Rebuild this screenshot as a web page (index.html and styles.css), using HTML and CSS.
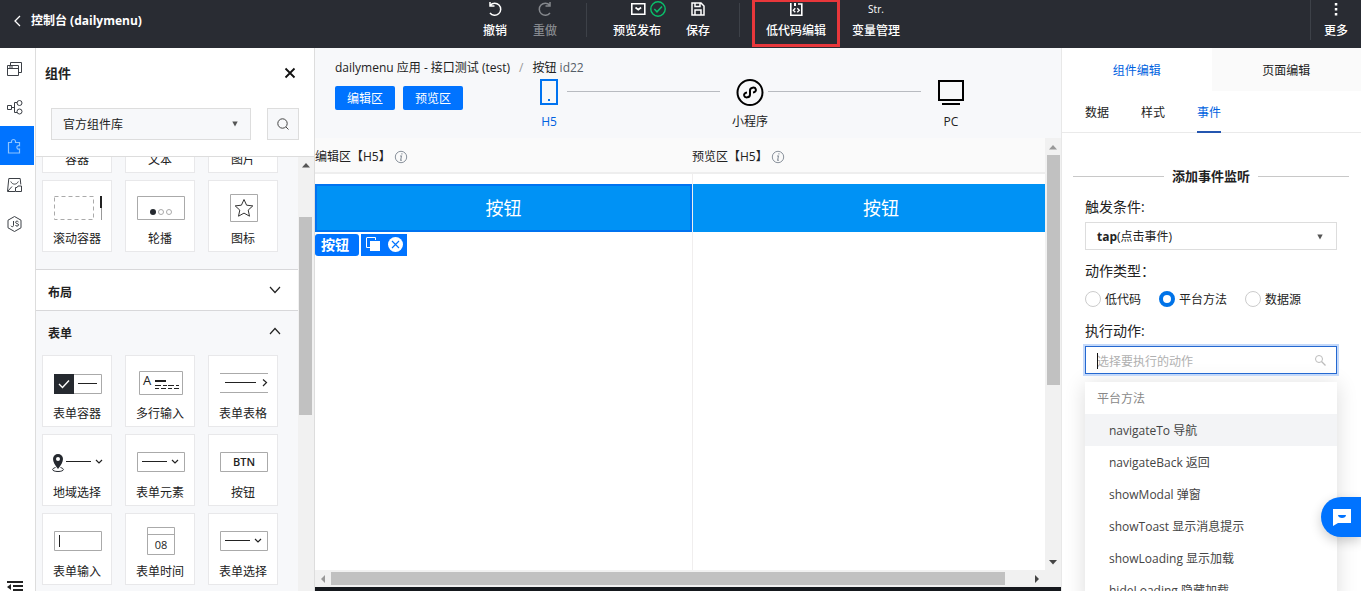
FILE: index.html
```html
<!DOCTYPE html>
<html lang="zh-CN">
<head>
<meta charset="utf-8">
<title>控制台 (dailymenu)</title>
<link rel="stylesheet" href="styles.css">
</head>
<body>
<svg class="defs" aria-hidden="true">
  <symbol id="info" viewBox="0 0 14 14"><circle cx="7" cy="7" r="5.7" fill="none" stroke="#8a929c"/><path d="M7.900 3.300v1.300M6 6h1.500l-.9 4.300h1.400" fill="none" stroke="#8a929c" stroke-width="1.100"/></symbol>
  <symbol id="caret" viewBox="0 0 6 6"><path d="M.3 .5h5.400L3 5.500z" fill="#555"/></symbol>
  <symbol id="up" viewBox="0 0 16 16"><path d="M4 10.500h8L8 6z"/></symbol>
  <symbol id="down" viewBox="0 0 16 16"><path d="M4 6h8l-4 4.500z"/></symbol>
</svg>

<header class="topbar">
  <a class="back" href="#">
    <svg width="10" height="12" viewBox="0 0 10 12"><path d="M8 1 3 6l5 5" fill="none" stroke="#fff" stroke-width="1.300"/></svg>
    <span>控制台 (dailymenu)</span>
  </a>
  <nav class="tools">
    <button class="tool"><svg width="18" height="18" viewBox="0 0 18 18"><path d="M4.300 5.200A6 6 0 1 1 4 13M4 2v4h4.500" fill="none" stroke="#fff" stroke-width="1.500"/></svg><span>撤销</span></button>
    <button class="tool tool-off"><svg width="18" height="18" viewBox="0 0 18 18"><path d="M13.700 5.200A6 6 0 1 0 14 13M14 2v4H9.500" fill="none" stroke="#85888d" stroke-width="1.500"/></svg><span>重做</span></button>
    <span class="bar"></span>
    <button class="tool tool-wide"><svg class="publish" width="38" height="18" viewBox="0 0 38 18"><path d="M2.800 3.800h13v10.400h-13zM6.500 7.500l2.800 2.200 2.800-2.200" fill="none" stroke="#fff" stroke-width="1.600"/><circle cx="29" cy="9" r="7.200" fill="none" stroke="#0abf6b" stroke-width="1.400"/><path d="m25.300 9 2.700 2.800 5-5.300" fill="none" stroke="#0abf6b" stroke-width="1.500"/></svg><span>预览发布</span></button>
    <button class="tool"><svg width="18" height="18" viewBox="0 0 18 18"><path d="M3 3h9l3 3v9H3zM6 3v3.500h5V3M6 15v-5h6v5" fill="none" stroke="#fff" stroke-width="1.500"/></svg><span>保存</span></button>
    <span class="bar"></span>
    <button class="tool tool-marked"><svg width="18" height="18" viewBox="0 0 18 18"><path d="M3.800 3v12.200h11V4H11" fill="none" stroke="#fff" stroke-width="1.600"/><path d="M7 3h2v3H7z" fill="#fff"/><path d="M8.300 8.200 6.300 10.200l2 2M10.300 8.200l2 2-2 2" fill="none" stroke="#fff" stroke-width="1.300"/></svg><span>低代码编辑</span></button>
    <button class="tool tool-wide"><span class="str">Str.</span><span>变量管理</span></button>
  </nav>
  <div class="more">
    <button class="tool"><svg width="18" height="18" viewBox="0 0 18 18"><path d="M7.800 3h2.500v2.500H7.800zM7.800 8h2.500v2.500H7.800zM7.800 13h2.500v2.500H7.800z" fill="#fff"/></svg><span>更多</span></button>
  </div>
</header>

<main class="workspace">
  <nav class="rail">
    <button aria-label="页面"><svg width="18" height="22" viewBox="0 0 18 22"><path d="M1.500 8.500h11v10h-11zM1.500 11.500h11M4.500 8V5.500h11v10H13M3 10h4" fill="none" stroke="#3c4046"/></svg></button>
    <button aria-label="流程"><svg width="18" height="18" viewBox="0 0 18 18"><path d="M1.500 7.500h4v4h-4zM5.500 9.500H8M11 4.500H8.500v10H11" fill="none" stroke="#3c4046"/><circle cx="13.500" cy="5" r="2.500" fill="none" stroke="#3c4046"/><circle cx="13.500" cy="13.500" r="2.500" fill="none" stroke="#3c4046"/></svg></button>
    <button class="on" aria-label="组件"><svg width="18" height="18" viewBox="0 0 18 18"><path d="M2.500 5.500h3c-.8-4 4.800-4 4 0h4v3.200c-3.500-.7-3.500 4 0 3.300v4h-11z" fill="none" stroke="#8cc4ff" stroke-width="1.200"/></svg></button>
    <button aria-label="资源"><svg width="18" height="18" viewBox="0 0 18 18"><path d="M9 15.500H1.500l1.300-13h11.400l.6 6M4.800 5.500c1.500 3.500 6 3.500 7.500 0M2 15l4-4.500M9.500 11.500h1.500l1-1.500h3.500v5.500h-6z" fill="none" stroke="#3c4046"/></svg></button>
    <button aria-label="脚本"><svg width="18" height="18" viewBox="0 0 18 18"><path d="m8.500 1.500 6.500 3.700v7.600l-6.500 3.700L2 12.800V5.200zM7.500 6v4.500c0 1.500-2.200 1.500-2.500.3M12.500 7c-.5-1.200-3-1.200-2.900.3.100 1.600 3 .9 3 2.600-.1 1.600-2.900 1.600-3.200.1" fill="none" stroke="#3c4046"/></svg></button>
    <button class="collapse" aria-label="收起"><svg width="18" height="10" viewBox="0 0 18 10"><path d="M1 1h16M7 5h10M7 9h10" stroke="#222" stroke-width="1.800"/><path d="M5 3v6L1 6z" fill="#222"/></svg></button>
  </nav>

  <section class="panel">
    <div class="panel-head"><h2>组件</h2><button aria-label="关闭"><svg width="12" height="12" viewBox="0 0 12 12"><path d="m1.500 1.500 9 9m0-9-9 9" stroke="#111" stroke-width="1.800"/></svg></button></div>
    <div class="search">
      <div class="pick"><select aria-label="组件库"><option>官方组件库</option></select><svg width="6" height="6"><use href="#caret"/></svg></div>
      <button aria-label="搜索"><svg width="14" height="14" viewBox="0 0 14 14"><circle cx="6.500" cy="6.500" r="4.700" fill="none" stroke="#444"/><path d="m10 10 2.500 2.500" stroke="#444"/></svg></button>
    </div>
    <div class="scroller">
      <div class="list">
        <div class="cards cards-cut">
          <button class="card"><svg viewBox="0 0 68 46"></svg><span>容器</span></button>
          <button class="card"><svg viewBox="0 0 68 46"></svg><span>文本</span></button>
          <button class="card"><svg viewBox="0 0 68 46"></svg><span>图片</span></button>
          <button class="card"><svg viewBox="0 0 68 46"><path d="M11.500 12.500h39v23h-39z" fill="none" stroke="#aaa" stroke-dasharray="4 3"/><path d="M58 12v12" stroke="#222" stroke-width="2"/><path d="M58.500 24v12" stroke="#999"/></svg><span>滚动容器</span></button>
          <button class="card"><svg viewBox="0 0 68 46"><path d="M11.500 12.500h47v23h-47z" fill="none" stroke="#aaa"/><circle cx="27" cy="28" r="3" fill="#25292f"/><circle cx="35" cy="28" r="2.500" fill="none" stroke="#aaa"/><circle cx="43" cy="28" r="2.500" fill="none" stroke="#aaa"/></svg><span>轮播</span></button>
          <button class="card"><svg viewBox="0 0 68 46"><path d="M21.500 10.500h27v27h-27z" fill="none" stroke="#aaa"/><path d="m35 15.500 2.600 5.700 6.200.7-4.600 4.200 1.300 6.100-5.500-3.100-5.500 3.100 1.300-6.100-4.600-4.200 6.200-.7z" fill="none" stroke="#333"/></svg><span>图标</span></button>
        </div>
        <button class="fold"><span>布局</span><svg width="12" height="8" viewBox="0 0 12 8"><path d="m1 1 5 5.500L11 1" fill="none" stroke="#222" stroke-width="1.200"/></svg></button>
        <button class="fold fold-open"><span>表单</span><svg width="12" height="8" viewBox="0 0 12 8"><path d="m1 7 5-5.500L11 7" fill="none" stroke="#222" stroke-width="1.200"/></svg></button>
        <div class="cards">
          <button class="card"><svg viewBox="0 0 68 46"><path d="M11.500 15.500h47v19h-47z" fill="none" stroke="#aaa"/><path d="M11 15h20v20H11z" fill="#25292f"/><path d="m16 25 3.500 3.500L26 21.500" fill="none" stroke="#fff" stroke-width="1.400"/><path d="M35 24.500h19" stroke="#222"/></svg><span>表单容器</span></button>
          <button class="card"><svg viewBox="0 0 68 46"><path d="M13.500 12.500h43v23h-43z" fill="none" stroke="#aaa"/><text x="17" y="26" font-size="13">A</text><path d="M29 22h11" stroke="#222" stroke-width="2"/><path d="M29 26.500h24" stroke="#222" stroke-dasharray="6 2 4 1"/><path d="M29 29.500h24" stroke="#222" stroke-dasharray="4 2 5 2"/></svg><span>多行输入</span></button>
          <button class="card"><svg viewBox="0 0 68 46"><path d="M11 14.500h48M11 33.500h48" stroke="#aaa"/><path d="M16 23.500h31M54 20.500l3.500 3-3.500 3.500" fill="none" stroke="#222" stroke-width="1.200"/></svg><span>表单表格</span></button>
          <button class="card"><svg viewBox="0 0 68 46"><path d="M15 31c-3-4-5-7-5-10a5 5 0 0 1 10 0c0 3-2 6-5 10z" fill="#25292f"/><circle cx="15" cy="21" r="2" fill="#fff"/><path d="M12.500 29.500c-5 1.500-3 4 2.500 4s7.500-2.500 2.500-4" fill="none" stroke="#25292f"/><path d="M23 23.500h25M53 22l3 3 3-3" fill="none" stroke="#222" stroke-width="1.200"/></svg><span>地域选择</span></button>
          <button class="card"><svg viewBox="0 0 68 46"><path d="M11.500 14.500h47v19h-47z" fill="none" stroke="#aaa"/><path d="M16 23.500h25M46 22l3 3 3-3" fill="none" stroke="#222" stroke-width="1.200"/></svg><span>表单元素</span></button>
          <button class="card"><svg viewBox="0 0 68 46"><path d="M11.500 14.500h47v19h-47z" fill="none" stroke="#aaa"/><text class="btn-word" x="35" y="28" font-size="11" text-anchor="middle">BTN</text></svg><span>按钮</span></button>
          <button class="card"><svg viewBox="0 0 68 46"><path d="M11.500 14.500h47v19h-47z" fill="none" stroke="#aaa"/><path d="M16.500 18v12" stroke="#222"/></svg><span>表单输入</span></button>
          <button class="card"><svg viewBox="0 0 68 46"><path d="M21.500 10.500h27v27h-27zM21.500 17.500h27" fill="none" stroke="#aaa"/><text x="35" y="32" font-size="11" text-anchor="middle">08</text></svg><span>表单时间</span></button>
          <button class="card"><svg viewBox="0 0 68 46"><path d="M11.500 14.500h47v19h-47z" fill="none" stroke="#aaa"/><path d="M16 23.500h25M46 22l3 3 3-3" fill="none" stroke="#222" stroke-width="1.200"/></svg><span>表单选择</span></button>
        </div>
      </div>
      <div class="vbar vbar-list"><svg width="16" height="16" fill="#555"><use href="#up"/></svg><i></i></div>
    </div>
  </section>

  <section class="stage">
    <div class="stage-top">
      <div class="crumbs"><span>dailymenu 应用 - 接口测试 (test)</span><span class="slash">/</span><span>按钮 <span class="id">id22</span></span></div>
      <div class="stage-row">
        <button class="primary">编辑区</button>
        <button class="primary">预览区</button>
        <div class="steps">
          <button class="step step-on"><svg width="28" height="28" viewBox="0 0 28 28"><path d="M6 2h16v24H6z" fill="none" stroke="#0073f0" stroke-width="2"/><path d="M13 21h2v2h-2z" fill="#0073f0"/></svg><span>H5</span></button>
          <span class="link"></span>
          <button class="step"><svg width="28" height="28" viewBox="0 0 28 28"><circle cx="14" cy="14.500" r="12.500" fill="none" stroke="#000" stroke-width="2"/><path d="M11 14.500c-2.200.3-3.200 1.500-2.800 3.200.7 2.500 5.800 2.300 5.800-1.200v-4c0-3.500 5.100-3.700 5.800-1.200.4 1.700-.6 2.900-2.800 3.200" fill="none" stroke="#000" stroke-width="2"/></svg><span>小程序</span></button>
          <span class="link"></span>
          <button class="step"><svg width="28" height="28" viewBox="0 0 28 28"><path d="M2 3h24v19H2zM5 26h18" fill="none" stroke="#000" stroke-width="2"/></svg><span>PC</span></button>
        </div>
      </div>
    </div>
    <div class="canvas">
      <div class="panes">
        <div class="pane">
          <div class="pane-head">编辑区【H5】<svg width="14" height="14"><use href="#info"/></svg></div>
          <div class="pane-body">
            <button class="demo demo-picked">按钮</button>
            <div class="tag"><span class="tag-name">按钮</span><span class="tag-acts"><svg width="46" height="22" viewBox="0 0 46 22"><path d="M5.500 4v9.500H9M5.500 3.500h9V6" fill="none" stroke="#fff"/><path d="M9 7h10v10H9z" fill="#fff"/><circle cx="34.500" cy="10.500" r="7.500" fill="#fff"/><path d="m31 7 7 7m0-7-7 7" stroke="#0073ff" stroke-width="1.200"/></svg></span></div>
          </div>
        </div>
        <div class="pane pane-preview">
          <div class="pane-head">预览区【H5】<svg width="14" height="14"><use href="#info"/></svg></div>
          <div class="pane-body"><button class="demo">按钮</button></div>
        </div>
      </div>
      <div class="vbar vbar-stage"><svg width="16" height="16" fill="#999"><use href="#up"/></svg><i></i><svg class="end" width="16" height="16" fill="#444"><use href="#down"/></svg></div>
      <div class="hbar"><svg width="16" height="16" viewBox="0 0 16 16"><path d="M10 4v8L6 8z" fill="#999"/></svg><i></i><svg class="end" width="16" height="16" viewBox="0 0 16 16"><path d="M6 4v8l4-4z" fill="#444"/></svg></div>
    </div>
  </section>

  <aside class="props">
    <div class="tabs"><button class="tab tab-on">组件编辑</button><button class="tab">页面编辑</button></div>
    <div class="subtabs"><button>数据</button><button>样式</button><button class="sub-on">事件</button></div>
    <h3 class="rule">添加事件监听</h3>
    <form class="fields">
      <label for="trigger">触发条件:</label>
      <button type="button" id="trigger" class="combo" role="combobox" aria-expanded="false" aria-haspopup="listbox"><span><b>tap</b>(点击事件)</span><svg width="6" height="6"><use href="#caret"/></svg></button>
      <span class="caption">动作类型：</span>
      <div class="radios">
        <label><input type="radio" name="kind">低代码</label>
        <label><input type="radio" name="kind" checked>平台方法</label>
        <label><input type="radio" name="kind">数据源</label>
      </div>
      <label for="action">执行动作:</label>
      <div class="action">
        <input id="action" type="text" placeholder="选择要执行的动作" autofocus>
        <svg width="12" height="12" viewBox="0 0 12 12"><circle cx="5" cy="5" r="3.500" fill="none" stroke="#bbb"/><path d="m7.500 7.500 4 4" stroke="#bbb" stroke-width="1.300"/></svg>
        <i class="cursor"></i>
      </div>
      <div class="menu">
        <div class="menu-title">平台方法</div>
        <ul>
          <li class="hot">navigateTo 导航</li>
          <li>navigateBack 返回</li>
          <li>showModal 弹窗</li>
          <li>showToast 显示消息提示</li>
          <li>showLoading 显示加载</li>
          <li>hideLoading 隐藏加载</li>
        </ul>
      </div>
    </form>
  </aside>
</main>
<button class="chat" aria-label="客服"><svg width="18" height="18" viewBox="0 0 18 18"><path d="M0 1h18v14H5l-5 3z" fill="#fff"/><path d="M5 7h8c0 4-8 4-8 0z" fill="#0073ff"/></svg></button>
</body>
</html>
```
FILE: styles.css
```css
* { box-sizing: border-box; }
body {
  margin: 0;
  height: 100vh;
  display: flex;
  flex-direction: column;
  overflow: hidden;
  font: 12px/18px "Open Sans", "Noto Sans CJK SC", sans-serif;
  color: #222;
  background: #fff;
}
button, input, select { font: inherit; color: inherit; margin: 0; padding: 0; border: 0; background: none; border-radius: 0; }
svg { display: block; flex: none; }
.defs { position: absolute; width: 0; height: 0; }

.topbar { flex: none; height: 48px; display: flex; background: #292c33; color: #fff; }
.back { flex: 1; display: flex; align-items: center; align-self: flex-start; height: 42px; padding-left: 12px; gap: 9px; color: #fff; font-weight: 700; text-decoration: none; }
.tools { display: flex; padding-left: 9px; }
.tool { width: 50px; height: 47px; display: flex; flex-direction: column; align-items: center; gap: 4px; white-space: nowrap; font-weight: 500; }
.tool-off { color: #85888d; }
.tool-wide { width: 72px; }
.publish { margin-left: 21px; }
.tool-marked { width: 88px; border: 3px solid #e8373b; border-top-width: 2px; }
.tool-marked svg { margin-top: -2px; }
.str { font-size: 10px; }
.bar { width: 1px; height: 34px; margin: 3px 14px 0 16px; background: #3d4148; }
.bar + .tool-marked { margin-left: -2px; }
.more { flex: 1; display: flex; justify-content: flex-end; }
.more .tool { height: 40px; border-left: 1px solid #3d4148; width: 51px; }

.workspace { flex: 1; min-height: 0; display: flex; }
.rail { flex: none; width: 36px; display: flex; flex-direction: column; border-right: 1px solid #ddd; }
.rail button { height: 39px; width: 34px; display: flex; align-items: center; padding-left: 6px; }
.rail .on { background: #0073ff; }
.rail .collapse { margin-top: auto; height: 10px; }

.panel { flex: none; width: 279px; display: flex; flex-direction: column; border-right: 1px solid #ddd; }
.panel-head { display: flex; justify-content: space-between; align-items: center; padding: 15px 18px 0 9px; }
.panel-head h2 { margin: 0; font-size: 13px; line-height: 20px; }
.search { display: flex; gap: 16px; padding: 25px 15px 16px; border-bottom: 1px solid #ddd; }
.pick { position: relative; flex: 1; }
.pick select { width: 100%; height: 32px; padding: 2px 11px 0; appearance: none; border: 1px solid #ddd; background: #f7f8fa; }
.pick svg { position: absolute; right: 13px; top: 13px; }
.search button { width: 32px; height: 32px; display: grid; place-items: center; border: 1px solid #ddd; background: #f7f8fa; }
.scroller { flex: 1; min-height: 0; display: flex; background: #f7f8fa; }
.list { flex: 1; overflow: hidden; }
.cards { display: grid; grid-template-columns: repeat(3, 70px); gap: 7px 13px; padding-left: 6px; }
.cards-cut { margin: -56px 0 17px; }
.card { height: 72px; padding-top: 3px; display: flex; flex-direction: column; align-items: center; border: 1px solid #e8e8ea; background: #fff; }
.card svg { width: 68px; height: 46px; }
.card text { fill: #222; font-family: "Open Sans", sans-serif; }
.card .btn-word { font-weight: 600; }
.fold { width: 100%; height: 41px; display: flex; justify-content: space-between; padding: 14px 17px 0 12px; border-top: 1px solid #d8d8da; background: #fff; font-weight: 700; }
.fold svg { margin-top: 2px; }
.fold-open { height: 45px; background: none; }
.vbar { display: flex; flex-direction: column; background: #f1f1f1; }
.vbar i, .hbar i { background: #c1c1c1; }
.vbar-list { width: 16px; }
.vbar-list i { margin: 44px 2px 0 1px; height: 198px; }

.stage { flex: 1; min-width: 0; display: flex; flex-direction: column; background: #15181d; }
.stage-top { flex: none; height: 90px; padding: 11px 92px 0 20px; background: #f7f8fa; }
.crumbs { display: flex; gap: 9px; white-space: nowrap; }
.slash { color: #999; }
.id { color: #555e68; }
.stage-row { display: flex; gap: 8px; padding-top: 1px; }
.primary { flex: none; width: 60px; height: 24px; margin-top: 8px; padding-top: 2px; border-radius: 2px; background: #0073ff; color: #fff; }
.steps { flex: 1; display: flex; margin-left: 60px; }
.step { width: 36px; display: flex; flex-direction: column; align-items: center; gap: 7px; }
.step-on { color: #0062e0; }
.link { flex: 1; height: 1px; margin: 13px 12px 0 0; background: #b8bbc0; }
.canvas { flex: 1; min-height: 0; margin-bottom: 4px; display: grid; grid-template: minmax(0, 1fr) 17px / minmax(0, 1fr) 16px; background: #f1f1f1; }
.panes { display: flex; overflow: hidden; background: #fff; }
.pane { flex: 0 0 377px; display: flex; flex-direction: column; }
.pane-head { display: flex; align-items: center; gap: 3px; height: 36px; padding-top: 3px; border-bottom: 2px solid #eee; background: #fafafa; }
.pane-body { flex: 1; padding-top: 10px; }
.pane-preview .pane-body { border-left: 1px solid #f0eeee; }
.demo { display: block; width: 100%; height: 48px; background: #0092f5; color: #fff; font-size: 18px; }
.demo-picked { border: 2px solid #0073f0; }
.tag { display: flex; gap: 2px; padding-top: 2px; }
.tag-name { width: 44px; padding-left: 6px; border-radius: 3px; background: #0073ff; color: #fff; font-size: 14px; line-height: 22px; font-weight: 700; }
.tag-acts { width: 46px; background: #0073ff; }
.vbar-stage { padding-top: 1px; }
.vbar-stage i { margin: 0 1px 0 2px; height: 230px; }
.end { margin-top: auto; }
.hbar { display: flex; align-items: center; }
.hbar i { flex: 1; height: 13px; margin-right: 24px; }
.hbar .end { margin: 0; }

.props { flex: none; width: 300px; border-left: 1px solid #e8e8e8; background: #fff; }
.tabs { display: flex; height: 43px; }
.tab { flex: 1; padding-top: 2px; background: #fafafa; }
.tab-on { background: #fff; color: #0062e0; }
.subtabs { display: flex; gap: 32px; height: 42px; padding-left: 23px; border-bottom: 1px solid #eaeaea; }
.subtabs button { height: 42px; padding-top: 4px; border-bottom: 2px solid transparent; }
.subtabs .sub-on { color: #0062e0; border-color: #2456b0; }
.rule { display: flex; align-items: center; gap: 8px; margin: 33px 12px 0 11px; font-size: 13px; line-height: 20px; white-space: nowrap; }
.rule::before, .rule::after { content: ""; flex: 1; height: 1px; background: #c8c8c8; }
.fields { display: flex; flex-direction: column; padding: 11px 24px 0 23px; }
.fields > label, .caption { font-size: 14px; line-height: 20px; }
.combo { display: flex; justify-content: space-between; align-items: center; height: 28px; margin: 5px 0 11px; padding: 2px 13px 0 11px; border: 1px solid #ddd; }
.radios { display: flex; gap: 18px; padding: 10px 0 12px; }
.radios label { display: flex; gap: 4px; white-space: nowrap; }
.radios input { appearance: none; width: 16px; height: 16px; border: 1px solid #ccc; border-radius: 50%; background: #fff; }
.radios input:checked { border: 4px solid #0073e8; }
.action { position: relative; margin-top: 5px; }
.action input { width: 100%; height: 28px; padding: 2px 11px 0; border: 1px solid #2468d0; outline: 2px solid #c4d9fa; caret-color: transparent; }
.action input::placeholder { color: #b0b0b0; opacity: 1; }
.action svg { position: absolute; right: 11px; top: 8px; }
.cursor { position: absolute; left: 12px; top: 7px; width: 1px; height: 16px; background: #111; }
.menu { margin-top: 8px; background: #fff; box-shadow: 0 2px 20px rgba(0, 0, 0, 0.14); }
.menu-title { padding: 2px 0 0 12px; line-height: 30px; color: #888; }
.menu ul { margin: 0; padding: 0; list-style: none; }
.menu li { padding: 2px 0 0 24px; line-height: 30px; color: #444; }
.menu .hot { background: #f3f4f6; }
.chat { position: fixed; right: 0; top: 497px; width: 40px; height: 40px; padding-left: 2px; display: grid; place-items: center; border-radius: 20px 0 0 20px; background: #0073ff; box-shadow: 0 4px 12px rgba(0, 0, 0, 0.2); }
```
